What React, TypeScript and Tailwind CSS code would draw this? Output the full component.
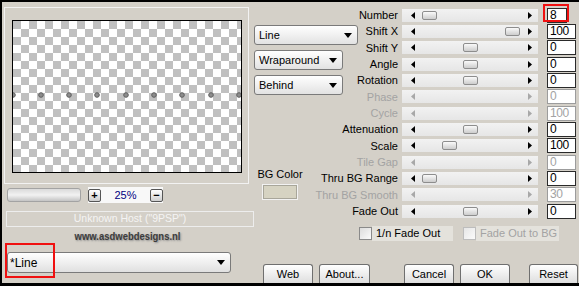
import React from 'react';

type Param = { label: string; value: string; thumb?: number; off?: boolean };

const params: Param[] = [
  { label: 'Number', value: '8', thumb: 20 },
  { label: 'Shift X', value: '100', thumb: 103 },
  { label: 'Shift Y', value: '0', thumb: 61 },
  { label: 'Angle', value: '0', thumb: 61 },
  { label: 'Rotation', value: '0', thumb: 61 },
  { label: 'Phase', value: '0', off: true },
  { label: 'Cycle', value: '100', off: true },
  { label: 'Attenuation', value: '0', thumb: 61 },
  { label: 'Scale', value: '100', thumb: 40 },
  { label: 'Tile Gap', value: '0', off: true },
  { label: 'Thru BG Range', value: '0', thumb: 20 },
  { label: 'Thru BG Smooth', value: '30', off: true },
  { label: 'Fade Out', value: '0', thumb: 61 },
];

const dots = [0, 28, 56, 84, 113, 141, 169, 198, 226];

const Tri = ({ left, off }: { left?: boolean; off?: boolean }) => (
  <svg width="4" height="7" viewBox="0 0 4 7">
    <path d={left ? 'M4 0L0 3.5L4 7Z' : 'M0 0L4 3.5L0 7Z'} fill={off ? '#a8a8a8' : '#000'} />
  </svg>
);

const Down = () => (
  <svg width="8" height="5" viewBox="0 0 8 5">
    <path d="M0 0H8L4 5Z" fill="#000" />
  </svg>
);

const Select = ({ text, w }: { text: string; w: string }) => (
  <div
    className={`${w} h-[20px] rounded-[3px] border border-[#7a7a7a] bg-linear-to-b from-white to-[#e2e2e2] flex items-center justify-between pl-[4px] pr-[5px] text-[11px]`}
  >
    <span>{text}</span>
    <Down />
  </div>
);

const Button = ({ text, w }: { text: string; w: string }) => (
  <div
    className={`${w} h-[19px] rounded-t-[3px] border border-b-0 border-[#6f6f6f] bg-linear-to-b from-white to-[#dedede] flex items-center justify-center text-[11px]`}
  >
    {text}
  </div>
);

const SmallBtn = ({ sign }: { sign: string }) => (
  <div className="w-[13px] h-[13px] rounded-[2px] border border-[#555] bg-linear-to-b from-white to-[#cfcfcf] flex items-center justify-center text-[11px] leading-none font-bold">
    {sign}
  </div>
);

export default function App() {
  return (
    <div className="w-[579px] h-[286px] overflow-hidden bg-[#d4d0c8] border-t-2 border-l-2 border-b-[3px] border-black flex font-['Liberation_Sans',Arial,sans-serif] text-black">
      {/* left: preview and presets */}
      <div className="w-[252px] flex flex-col shrink-0">
        <div className="mt-[5px] ml-[2px] w-[245px] h-[177px] border border-[#f2f2f2] pl-[7px] pt-[12px]">
          <div className="relative w-[230px] h-[153px] border border-black bg-[repeating-conic-gradient(#fff_0_25%,#c0c0c0_0_50%)] bg-[length:16px_16px]">
            <svg className="absolute left-0 top-0" width="228" height="151">
              {dots.map((x) => (
                <circle key={x} cx={x} cy={74} r={2.3} fill="#8c8c8c" stroke="#5e5e5e" strokeWidth={1} />
              ))}
            </svg>
          </div>
        </div>

        <div className="mt-[3px] h-[16px] flex items-center">
          <div className="ml-[5px] w-[74px] h-[14px] rounded-[3px] border border-[#a3a3a3] bg-linear-to-b from-[#dadada] via-[#f2f2f2] to-[#c4c4c4]" />
          <div className="ml-[7px] w-[75px] h-[16px] bg-[#f8f8f8] flex items-center justify-between">
            <SmallBtn sign="+" />
            <span className="text-[11px] text-[#000080]">25%</span>
            <SmallBtn sign="−" />
          </div>
        </div>

        <div className="mt-[8px] ml-[4px] w-[248px] h-[16px] border border-[#ededed] flex items-center justify-center text-[10.5px] text-[#f4f4f4]">
          Unknown Host ("9PSP")
        </div>

        <div className="mt-[2px] h-[14px] flex items-center justify-center">
          <span className="text-[11px] font-bold text-[#3c3c3c] scale-x-[0.86] [text-shadow:1px_1px_2px_#8a8a8a]">
            www.asdwebdesigns.nl
          </span>
        </div>

        <div className="relative mt-[9px] ml-[5px] w-[224px] h-[21px] rounded-[3px] border border-[#7a7a7a] bg-linear-to-b from-white to-[#e0e0e0] flex items-center justify-between pl-[2px] pr-[5px] text-[12px]">
          <span>*Line</span>
          <Down />
          <div className="absolute -left-[3px] -top-[10px] w-[50px] h-[35px] border-2 border-[#f01010]" />
        </div>
      </div>

      {/* right: modes, parameters, buttons */}
      <div className="flex-1 flex flex-col">
        <div className="h-[217px] pt-[5px] flex">
          <div className="w-[48px] shrink-0 flex flex-col">
            <div className="mt-[18px] flex flex-col gap-[5px]">
              <Select text="Line" w="w-[104px]" />
              <Select text="Wraparound" w="w-[89px]" />
              <Select text="Behind" w="w-[89px]" />
            </div>
            <div className="mt-[73px] ml-[3px] w-[46px] flex flex-col items-center">
              <span className="text-[11px] leading-[13px] whitespace-nowrap">BG Color</span>
              <div className="mt-[3px] w-[36px] h-[16px] border border-[#f2f2f2] bg-[#d6d3c2] shadow-[inset_0_0_0_1px_#a8a69a]" />
            </div>
          </div>

          <div className="flex flex-col">
            {params.map((p) => (
              <div key={p.label} className="h-[16.33px] flex items-center">
                <div className={`w-[96px] text-right text-[11px] whitespace-nowrap ${p.off ? 'text-[#a3a3a3]' : ''}`}>
                  {p.label}
                </div>
                <div className="relative ml-[4px] w-[136px] h-[13px] bg-linear-to-b from-[#f2f2f2] to-[#e6e6e6] flex items-center justify-between pl-[9px] pr-[6px]">
                  <Tri left off={p.off} />
                  <Tri off={p.off} />
                  {p.thumb !== undefined && (
                    <div
                      className="absolute top-[2px] w-[15px] h-[9px] rounded-[2px] border border-[#8d8d8d] bg-linear-to-b from-[#fafafa] to-[#cdcdcd]"
                      style={{ left: p.thumb }}
                    />
                  )}
                </div>
                <div className="relative ml-[9px]">
                  <div
                    className={`h-[15px] border bg-white pl-[2px] text-[12px] leading-[13px] tracking-[-0.4px] ${
                      p.label === 'Number' ? 'w-[20px]' : 'w-[29px]'
                    } ${p.off ? 'border-[#9c9c9c] text-[#a3a3a3]' : 'border-[#2a2a2a]'}`}
                  >
                    {p.value}
                  </div>
                  {p.label === 'Number' && (
                    <div className="absolute -left-[4px] -top-[4px] w-[26px] h-[18px] border-2 border-[#f01010]" />
                  )}
                </div>
              </div>
            ))}
          </div>
        </div>

        <div className="mt-[7px] h-[15px] flex items-center text-[11px]">
          <div className="ml-[105px] w-[13px] h-[13px] border border-[#8a8a8a] bg-linear-to-br from-[#dcdcdc] to-[#fbfbfb]" />
          <div className="w-[81px] h-[15px] bg-[#e4e2dc] pl-[4px] flex items-center">1/n Fade Out</div>
          <div className="ml-[10px] w-[13px] h-[13px] border border-[#bdbdbd] bg-linear-to-br from-[#e6e6e6] to-[#fbfbfb]" />
          <div className="w-[83px] h-[15px] bg-[#e4e2dc] pl-[4px] flex items-center text-[#a3a3a3]">Fade Out to BG</div>
        </div>

        <div className="mt-[23px] flex">
          <div className="ml-[9px]"><Button text="Web" w="w-[50px]" /></div>
          <div className="ml-[6px]"><Button text="About..." w="w-[51px]" /></div>
          <div className="ml-[34px]"><Button text="Cancel" w="w-[50px]" /></div>
          <div className="ml-[6px]"><Button text="OK" w="w-[50px]" /></div>
          <div className="ml-[19px]"><Button text="Reset" w="w-[49px]" /></div>
        </div>
      </div>
    </div>
  );
}
